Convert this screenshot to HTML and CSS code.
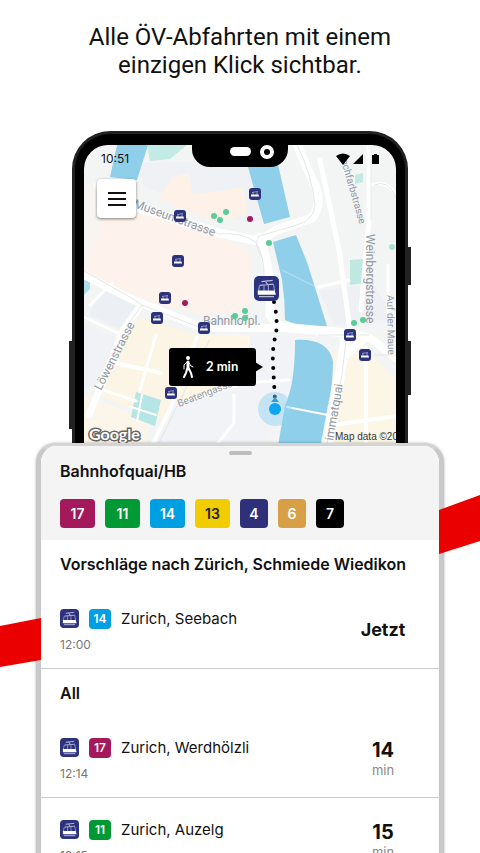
FILE: index.html
```html
<!DOCTYPE html>
<html lang="de">
<head>
    <meta charset="UTF-8">
    <meta name="viewport" content="width=device-width, initial-scale=1.0">
    <title>ÖV-Abfahrten</title>
    <link rel="stylesheet" href="styles.css">
</head>
<body>
    <svg class="sprite" aria-hidden="true">
        <symbol id="tram" viewBox="0 0 20 20">
            <rect width="20" height="20" rx="4" fill="#2d327d"/>
            <path d="M6 4.500 15 3.500M9 4l2 3M4.500 7.500 15.500 6.500" fill="none" stroke="#b9bbdc" stroke-width="1"/>
            <path d="M4.500 7.500 3.500 12M8 7v5M11.500 7v5M15.500 6.500l1 5.500" fill="none" stroke="#8d91c4" stroke-width="1"/>
            <path d="M3 11.500h13.500l1 3.500H3z" fill="#fff"/>
            <path d="M4 16.500h12" stroke="#b9bbdc" stroke-width="1"/>
        </symbol>
        <symbol id="stop" viewBox="0 0 12 12">
            <rect width="12" height="12" rx="3" fill="#2d327d"/>
            <path d="M3 4.500 9 3.500M4 4v3M8 4v3" fill="none" stroke="#8d91c4" stroke-width="1"/>
            <path d="M2 6.500h7.500l.5 2H2z" fill="#fff"/>
        </symbol>
    </svg>

    <main class="page">
        <h1>Alle ÖV-Abfahrten mit einem<br>einzigen Klick sichtbar.</h1>

        <section class="phone">
            <span class="key key-left"></span>
            <span class="key key-top"></span>
            <span class="key key-right"></span>
            <div class="screen">
                <svg class="map" viewBox="0 0 312 330" preserveAspectRatio="xMidYMin slice" role="img" aria-label="Karte">
                    <rect width="312" height="330" fill="#f3f4f4"/>

                    <!-- building blocks -->
                    <path d="M55 18 160 15 185 75 160 77 60 42z" fill="#eff1f5"/>
                    <path d="M88 32l17-4 4 22 50-8 5 28-34 6-55-22z" fill="#fdf1e8"/>
                    <path d="M0 38 50 60 0 130z" fill="#f7f4f2"/>
                    <path d="M0 128 28 57 165 103 166 165 120 170 60 155z" fill="#fef2ec"/>
                    <path d="M22 140 60 158 38 185 5 170z" fill="#eceff4"/>
                    <path d="M0 178 34 194 10 240 0 245z" fill="#f0f2f6"/>
                    <path d="M55 172l58 18-30 88-75-30z" fill="#fcf5e6"/>
                    <path d="M113 190h53v60l-75 10z" fill="#fdf6e5"/>
                    <path d="M166 190h42v62l-30 46H72l20-38 74-25z" fill="#f1f3f7"/>
                    <path d="M0 250 65 275 60 330H0z" fill="#fcf6ea"/>
                    <path d="M248 210l25-15 37 38v97h-60z" fill="#fbf6e5"/>
                    <path d="M235 145l55-6 20 35-60 6z" fill="#eff0f4"/>

                    <!-- parks -->
                    <path d="M63 0h40L86 14 66 16z" fill="#c4eae5"/>
                    <path d="M52 247l25 8-6 26-24-9z" fill="#b5e5e4"/>
                    <path d="M266 115l15-1v24l-15 2z" fill="#bfe9e0"/>
                    <path d="M271 30l8-2v9l-8 2z" fill="#c4ebe1"/>
                    <path d="M0 135h6v9l-6 6z" fill="#a9dde9"/>
                    <circle cx="308" cy="102" r="3" fill="#a9e2cd"/>

                    <!-- water -->
                    <path d="M33 0h31L53 35 26 32z" fill="#8fcfe9"/>
                    <path d="M162 15h31l13 57-26 7z" fill="#8fcfe9"/>
                    <path d="M189 97l23-7 11 27 20 64q-25 2-42-6 0-20-3-40z" fill="#8fcfe9"/>
                    <path d="M211 195q34-2 38 22 0 22-5 43l-13 70h-42l12-70q10-20 10-65z" fill="#8fcfe9"/>

                    <!-- streets -->
                    <g fill="none" stroke="#fff" stroke-linecap="round" stroke-linejoin="round">
                        <path d="M14 40 55 63l80 25 40 8 18-11 35-12q10-12 4-30L213 0" stroke-width="9"/>
                        <path d="M175 92q8 18 11 50v28l10 12 46 4 30 3" stroke-width="9"/>
                        <path d="M0 130l45 23 74 30h80" stroke-width="8"/>
                        <path d="M57 160 40 184 5 270" stroke-width="7"/>
                        <path d="M28 138 6 160M0 172l40 19M10 242l42 14M72 190 56 245" stroke-width="3"/>
                        <path d="M113 192 87 262l-20 40M32 218l45 10" stroke-width="4"/>
                        <path d="M96 258l64-20 45-3M150 250v28l-16 20" stroke-width="3"/>
                        <path d="M236 15l19 90 11 80M285 0v75l-8 90" stroke-width="5"/>
                        <path d="M262 190l-6 40-16 90" stroke-width="10"/>
                        <path d="M270 188l16 5 26 20M262 210l20-18" stroke-width="8"/>
                        <path d="M282 202v100M250 280l62-9" stroke-width="4"/>
                        <path d="M235 142l30-7M288 40q14-6 24 10" stroke-width="3"/>
                        <path d="M304 120v50" stroke-width="3"/>
                        <path d="M203 262l46 9" stroke-width="2"/>
                        <path d="M47 262l25 8M58 250l-5 26" stroke-width="2"/>
                    </g>
                    <path d="M198 125l32 16" stroke="#b9e0f0" stroke-width="1" fill="none"/>
                    <g fill="none" stroke="#e4e6e8" stroke-width="1">
                        <path d="M60 63l75 26q24-2 36 8 10 12 9 40"/>
                        <path d="M0 126l46 26 12 8 72 28M213 0q15 30 18 60-1 15-18 20l-38 11q-6 8 3 22"/>
                        <path d="M287 0v75M290 40q14-6 22 12M235 190h50M262 195l-4 35-15 68M290 210h22"/>
                        <path d="M126 194 75 298M58 160 42 182"/>
                    </g>

                    <!-- street names -->
                    <g class="street">
                        <text transform="translate(49 62) rotate(20)">Museumstrasse</text>
                        <text transform="translate(17 246) rotate(-63)">Löwenstrasse</text>
                        <text transform="translate(119 180)">Bahnhofpl.</text>
                        <text transform="translate(282 89) rotate(90)">Weinbergstrasse</text>
                        <text class="small" transform="translate(257 15) rotate(74)">ochfarbstrasse</text>
                        <text class="small" transform="translate(303 150) rotate(89)">Auf der Maue</text>
                        <text class="small" transform="translate(95 262) rotate(-21)">Beatengasse</text>
                        <text transform="translate(249 296) rotate(-80)">immatquai</text>
                    </g>

                    <g fill="#5bcb9c">
                        <circle cx="130" cy="71" r="3"/><circle cx="136" cy="75" r="3"/><circle cx="142" cy="67" r="3"/>
                        <circle cx="185" cy="98" r="3"/><circle cx="151" cy="171" r="3"/><circle cx="161" cy="166" r="3"/>
                        <circle cx="161" cy="173" r="3"/><circle cx="270" cy="178" r="3"/><circle cx="279" cy="175" r="3"/>
                    </g>
                    <circle cx="166" cy="74" r="3" fill="#a3195b"/>
                    <circle cx="101" cy="158" r="3" fill="#a3195b"/>

                    <!-- stops -->
                    <use href="#stop" x="90" y="65" width="12" height="12"/>
                    <use href="#stop" x="165" y="43" width="12" height="12"/>
                    <use href="#stop" x="88" y="110" width="12" height="12"/>
                    <use href="#stop" x="75" y="147" width="12" height="12"/>
                    <use href="#stop" x="67" y="167" width="12" height="12"/>
                    <use href="#stop" x="114" y="177" width="12" height="12"/>
                    <use href="#stop" x="81" y="242" width="12" height="12"/>
                    <use href="#stop" x="260" y="184" width="12" height="12"/>
                    <use href="#stop" x="275" y="204" width="12" height="12"/>

                    <!-- walking route -->
                    <path d="M190 157q4 18 2 32-4 14-3 30l2 36" fill="none" stroke="#000" stroke-width="4" stroke-linecap="round" stroke-dasharray="0 9.500"/>
                    <use href="#tram" x="170" y="131" width="25" height="25"/>
                    <circle cx="191" cy="264" r="17" fill="#8fd3f3" opacity=".45"/>
                    <path d="M187 257l4-5 4 5z" fill="#2a9fd6"/>
                    <circle cx="191" cy="264" r="6" fill="#0fa5f0"/>
                    <rect x="85" y="203" width="87" height="38" rx="3"/>
                    <path d="M171 217l8 5-8 5z"/>
                    <g fill="none" stroke="#fff" stroke-linecap="round" stroke-linejoin="round">
                        <circle cx="104" cy="213" r="2" fill="#fff" stroke="none"/>
                        <path d="M104 217v7" stroke-width="3"/>
                        <path d="M103 217l-3 3v4M105 218l2 3 2 1" stroke-width="1"/>
                        <path d="M103 224l-1 4-2 4M105 224l2 4 1 4" stroke-width="2"/>
                    </g>
                    <text class="walk" x="122" y="226">2 min</text>

                    <text class="google" x="5" y="295">Google</text>
                    <text class="credit" x="251" y="295">Map data ©20</text>
                </svg>

                <header class="statusbar">
                    <time>10:51</time>
                    <svg width="44" height="12" viewBox="0 0 44 12" aria-hidden="true">
                        <path d="M0 3q7-5 14 0L7 12zM17 11 27 1v10zM36 2h2V1h3v1h2v9h-7z"/>
                    </svg>
                </header>
                <div class="notch"><span class="sensor"></span><span class="camera"></span></div>
                <button class="menu" type="button" aria-label="Menü">
                    <svg width="18" height="14" viewBox="0 0 18 14"><path d="M0 1h18M0 7h18M0 13h18" stroke="#111" stroke-width="2"/></svg>
                </button>
            </div>
        </section>

        <section class="sheet-wrap">
            <svg class="band band-left" viewBox="0 0 41 50" aria-hidden="true"><path d="M0 8 41 0v42L0 49z" fill="#eb0000"/></svg>
            <svg class="band band-right" viewBox="0 0 41 59" aria-hidden="true"><path d="M0 15 41 0v46L0 59z" fill="#eb0000"/></svg>

            <div class="sheet">
                <header class="station">
                    <span class="handle"></span>
                    <h2>Bahnhofquai/HB</h2>
                    <div class="lines">
                        <span class="line double l17">17</span>
                        <span class="line double l11">11</span>
                        <span class="line double l14">14</span>
                        <span class="line double l13">13</span>
                        <span class="line l4">4</span>
                        <span class="line l6">6</span>
                        <span class="line l7">7</span>
                    </div>
                </header>

                <h3>Vorschläge nach Zürich, Schmiede Wiedikon</h3>
                <ul class="departures">
                    <li class="departure">
                        <div class="route">
                            <svg class="tram"><use href="#tram"/></svg>
                            <span class="tag l14">14</span>
                            <span class="dest">Zurich, Seebach</span>
                            <time>12:00</time>
                        </div>
                        <div class="wait"><strong>Jetzt</strong></div>
                    </li>
                </ul>

                <h3>All</h3>
                <ul class="departures">
                    <li class="departure">
                        <div class="route">
                            <svg class="tram"><use href="#tram"/></svg>
                            <span class="tag l17">17</span>
                            <span class="dest">Zurich, Werdhölzli</span>
                            <time>12:14</time>
                        </div>
                        <div class="wait"><strong class="minutes">14</strong><span>min</span></div>
                    </li>
                    <li class="departure">
                        <div class="route">
                            <svg class="tram"><use href="#tram"/></svg>
                            <span class="tag l11">11</span>
                            <span class="dest">Zurich, Auzelg</span>
                            <time>12:15</time>
                        </div>
                        <div class="wait"><strong class="minutes">15</strong><span>min</span></div>
                    </li>
                </ul>
            </div>
        </section>
    </main>
</body>
</html>
```
FILE: styles.css
```css
* {
    box-sizing: border-box;
}
body {
    margin: 0;
    background: #fff;
    color: #111;
    font-family: Inter, sans-serif;
}
.sprite {
    display: none;
}
.page {
    height: 100vh;
    overflow: hidden;
}
h1 {
    margin: 0;
    padding: 23px 16px 52px;
    font-family: Roboto, sans-serif;
    font-size: 24px;
    line-height: 28px;
    font-weight: 400;
    text-align: center;
}

/* phone */
.phone {
    position: relative;
    margin: 0 72px;
    padding: 11px 9px 0;
    border: 3px solid #222;
    border-bottom: 0;
    border-radius: 38px 38px 0 0;
    background: #000;
}
.screen {
    position: relative;
    height: 330px;
    border-radius: 24px 24px 0 0;
    overflow: hidden;
}
.map {
    display: block;
    width: 100%;
    height: 100%;
}
.key {
    position: absolute;
    width: 3px;
    background: #222;
}
.key-left {
    left: -6px;
    top: 207px;
    height: 88px;
}
.key-top {
    right: -6px;
    top: 113px;
    height: 38px;
}
.key-right {
    right: -6px;
    top: 207px;
    height: 54px;
}
.statusbar {
    position: absolute;
    top: 0;
    left: 0;
    right: 0;
    display: flex;
    align-items: center;
    justify-content: space-between;
    padding: 6px 16px 0 17px;
    font-size: 12px;
    line-height: 16px;
}
.notch {
    position: absolute;
    top: 0;
    left: 50%;
    transform: translateX(-50%);
    display: flex;
    align-items: flex-start;
    justify-content: flex-end;
    gap: 9px;
    width: 96px;
    height: 22px;
    padding-right: 14px;
    border-radius: 0 0 18px 18px;
    background: #000;
}
.sensor {
    width: 21px;
    height: 9px;
    margin-top: 2px;
    border-radius: 5px;
    background: #fff;
}
.camera {
    width: 14px;
    height: 14px;
    border: 4px solid #fff;
    border-radius: 50%;
}
.menu {
    position: absolute;
    top: 34px;
    left: 13px;
    display: flex;
    align-items: center;
    justify-content: center;
    width: 39px;
    height: 39px;
    padding: 0;
    border: 0;
    border-radius: 4px;
    background: #fff;
    box-shadow: 0 1px 3px rgba(0,0,0,0.5);
    cursor: pointer;
}

/* map labels */
.street {
    fill: #92989f;
    font-family: Roboto, sans-serif;
    font-size: 12px;
}
.street .small {
    font-size: 10px;
}
.walk {
    fill: #fff;
    font-family: Lato, sans-serif;
    font-size: 13px;
    font-weight: 700;
}
.google {
    fill: #fff;
    stroke: #666;
    stroke-width: 3px;
    paint-order: stroke;
    font-family: Lato, sans-serif;
    font-size: 16px;
    font-weight: 700;
}
.credit {
    fill: #333;
    font-family: "Liberation Sans", sans-serif;
    font-size: 10px;
}

/* departures */
.sheet-wrap {
    position: relative;
    margin-top: -32px;
    padding: 0 36px;
}
.band {
    position: absolute;
    z-index: 1;
    width: 41px;
}
.band-left {
    left: 0;
    top: 175px;
}
.band-right {
    right: 0;
    top: 52px;
}
.sheet {
    border: 5px solid #c9c9c9;
    border-top: 3px solid #d4d4d4;
    border-radius: 20px 20px 0 0;
    background: #fff;
    box-shadow: 0 0 3px rgba(0,0,0,0.3);
    overflow: hidden;
}
.station {
    display: flex;
    flex-direction: column;
    padding: 5px 19px 12px;
    background: #f4f4f4;
}
.handle {
    align-self: center;
    width: 23px;
    height: 4px;
    border-radius: 2px;
    background: #bdbdbd;
}
h2, h3 {
    margin: 0;
    font-size: 16px;
    line-height: 20px;
    font-weight: 600;
}
h2 {
    margin: 6px 0 18px;
}
h3 {
    padding: 14px 19px 13px;
}
.lines {
    display: flex;
    gap: 10px;
}
.line {
    min-width: 28px;
    border-radius: 4px;
    color: #fff;
    font-size: 14px;
    line-height: 29px;
    font-weight: 600;
    text-align: center;
}
.double {
    min-width: 35px;
}
.l17 { background: #a3195b; }
.l11 { background: #009933; }
.l14 { background: #009fe3; }
.l13 { background: #f0cc00; color: #222; }
.l4 { background: #2e3179; }
.l6 { background: #d99f46; }
.l7 { background: #000; }
.departures {
    margin: 0;
    padding: 0;
    list-style: none;
}
.departure {
    display: flex;
    align-items: center;
    justify-content: space-between;
    height: 82px;
    padding: 5px 33px 0 19px;
    border-bottom: 1px solid #ccc;
}
.route {
    display: grid;
    grid-template-columns: 19px 22px auto;
    align-items: center;
    column-gap: 10px;
    row-gap: 9px;
}
.tram {
    width: 19px;
    height: 19px;
}
.tag {
    border-radius: 4px;
    color: #fff;
    font-size: 12px;
    line-height: 20px;
    font-weight: 600;
    text-align: center;
}
.dest {
    font-size: 15px;
    line-height: 20px;
}
.route time {
    grid-column: 1 / -1;
    color: #777;
    font-size: 12px;
    line-height: 14px;
}
.wait {
    display: flex;
    flex-direction: column;
    align-items: center;
    min-width: 46px;
}
.wait strong {
    font-size: 18px;
    line-height: 22px;
    font-weight: 700;
}
.wait .minutes {
    font-size: 20px;
}
.wait span {
    color: #888;
    font-size: 13px;
    line-height: 18px;
}
```
